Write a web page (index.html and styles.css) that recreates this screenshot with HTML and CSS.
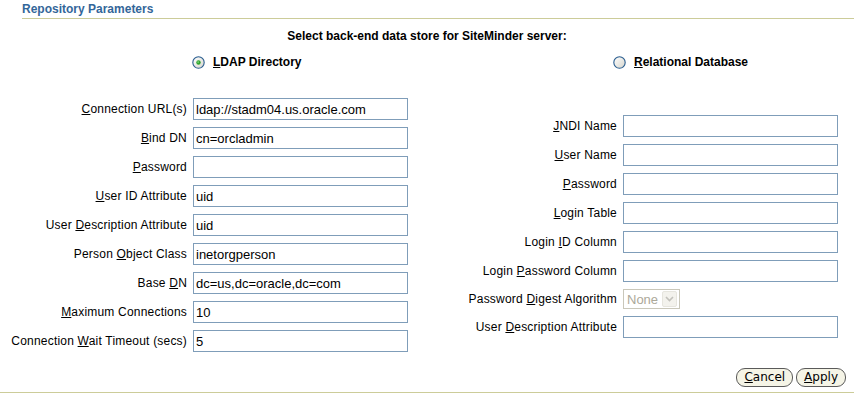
FILE: index.html
```html
<!DOCTYPE html>
<html>
<head>
  <meta charset="UTF-8">
  <title>Repository Parameters</title>
  <link rel="stylesheet" href="styles.css">
</head>
<body>
  <div class="page">
    <h2 class="section-title">Repository Parameters</h2>
    <p class="prompt">Select back-end data store for SiteMinder server:</p>

    <div class="panels">
      <div class="panel panel-ldap">
        <label class="choice">
          <svg class="radio" width="13" height="13" viewBox="0 0 13 13">
            <defs>
              <linearGradient id="rg1" x1="0" y1="0" x2="1" y2="1">
                <stop offset="0" stop-color="#ffffff"/>
                <stop offset="1" stop-color="#d6d5cc"/>
              </linearGradient>
            </defs>
            <circle cx="6.5" cy="6.5" r="5.7" fill="url(#rg1)" stroke="#2a5d8f" stroke-width="1.1"/>
            <circle cx="6.5" cy="6.5" r="2.2" fill="#2fa52f"/>
            <circle cx="6.1" cy="6.1" r="0.8" fill="#8fe08f"/>
          </svg>
          <span><u>L</u>DAP Directory</span>
        </label>
        <div class="fields">
          <label><u>C</u>onnection URL(s)</label>
          <input type="text" value="ldap://stadm04.us.oracle.com">
          <label><u>B</u>ind DN</label>
          <input type="text" value="cn=orcladmin">
          <label><u>P</u>assword</label>
          <input type="password" value="">
          <label><u>U</u>ser ID Attribute</label>
          <input type="text" value="uid">
          <label>User <u>D</u>escription Attribute</label>
          <input type="text" value="uid">
          <label>Person <u>O</u>bject Class</label>
          <input type="text" value="inetorgperson">
          <label>Base <u>D</u>N</label>
          <input type="text" value="dc=us,dc=oracle,dc=com">
          <label><u>M</u>aximum Connections</label>
          <input type="text" value="10">
          <label>Connection <u>W</u>ait Timeout (secs)</label>
          <input type="text" value="5">
        </div>
      </div>

      <div class="panel panel-db">
        <label class="choice">
          <svg class="radio" width="13" height="13" viewBox="0 0 13 13">
            <defs>
              <linearGradient id="rg2" x1="0" y1="0" x2="1" y2="1">
                <stop offset="0" stop-color="#ffffff"/>
                <stop offset="1" stop-color="#d6d5cc"/>
              </linearGradient>
            </defs>
            <circle cx="6.5" cy="6.5" r="5.7" fill="url(#rg2)" stroke="#2a5d8f" stroke-width="1.1"/>
          </svg>
          <span><u>R</u>elational Database</span>
        </label>
        <div class="fields">
          <label><u>J</u>NDI Name</label>
          <input type="text" value="">
          <label><u>U</u>ser Name</label>
          <input type="text" value="">
          <label><u>P</u>assword</label>
          <input type="password" value="">
          <label><u>L</u>ogin Table</label>
          <input type="text" value="">
          <label>Login <u>I</u>D Column</label>
          <input type="text" value="">
          <label>Login <u>P</u>assword Column</label>
          <input type="text" value="">
          <label>Password <u>D</u>igest Algorithm</label>
          <div class="select">
            <span class="select-value">None</span>
            <span class="select-arrow">
              <svg width="9" height="6" viewBox="0 0 9 6">
                <path d="M1 1 L4.5 4.5 L8 1" fill="none" stroke="#c2c1bb" stroke-width="1.6"/>
              </svg>
            </span>
          </div>
          <label>User <u>D</u>escription Attribute</label>
          <input type="text" value="">
        </div>
      </div>
    </div>

    <div class="actions">
      <button type="button"><u>C</u>ancel</button>
      <button type="button"><u>A</u>pply</button>
    </div>
  </div>
</body>
</html>
```

FILE: styles.css
```css
body {
  margin: 0;
  background: #ffffff;
  font-family: "Liberation Sans", Arial, sans-serif;
  font-size: 12px;
  color: #000;
}
.page {
  width: 854px;
}
.section-title {
  margin: 0 0 0 22px;
  padding: 2px 0 2px 0;
  font-size: 12px;
  line-height: 14px;
  font-weight: bold;
  color: #336699;
  border-bottom: 1px solid #cccc99;
}
.prompt {
  margin: 10px 0 0 0;
  line-height: 14px;
  font-weight: bold;
  text-align: center;
}
.panels {
  display: flex;
}
.panel {
  display: flex;
  flex-direction: column;
}
.panel-ldap {
  width: 430px;
}
.panel-db {
  flex: 1;
}
.choice {
  display: flex;
  align-items: center;
  gap: 8px;
  height: 16px;
  margin-top: 11px;
  font-weight: bold;
}
.panel-ldap .choice {
  margin-left: 192px;
}
.panel-db .choice {
  margin-left: 183px;
}
.radio {
  display: block;
}
.fields {
  display: grid;
  grid-template-columns: 187px 215px;
  column-gap: 6px;
  row-gap: 7px;
  align-items: center;
}
.panel-ldap .fields {
  margin-top: 28px;
}
.panel-db .fields {
  margin-top: 45px;
}
.fields label {
  text-align: right;
  white-space: nowrap;
  letter-spacing: 0.2px;
}
.fields input {
  box-sizing: border-box;
  width: 215px;
  height: 22px;
  margin: 0;
  padding: 0 2px;
  border: 1px solid #7f9db9;
  font-family: "Liberation Sans", Arial, sans-serif;
  font-size: 13px;
  color: #000;
  background: #fff;
  outline: none;
}
.select {
  box-sizing: border-box;
  width: 57px;
  height: 20px;
  display: flex;
  align-items: center;
  justify-content: space-between;
  border: 1px solid #c9c7ba;
  padding: 0 2px 0 3px;
  background: #fff;
}
.select-value {
  font-size: 13px;
  color: #aca899;
}
.select-arrow {
  box-sizing: border-box;
  width: 15px;
  height: 16px;
  display: flex;
  align-items: center;
  justify-content: center;
  border: 1px solid #e6e5de;
  border-radius: 2px;
  background: #f3f2ed;
}
.actions {
  display: flex;
  justify-content: flex-end;
  gap: 3px;
  margin-top: 16px;
  padding: 0 8px 5px 0;
  border-bottom: 1px solid #cccc99;
}
.actions button {
  height: 19px;
  padding: 0 7px;
  border: 1px solid #5a5a5a;
  border-radius: 9px;
  background: #f5f4e6;
  font-family: "DejaVu Sans", Tahoma, sans-serif;
  font-size: 12px;
  line-height: 15px;
  color: #000;
}
```
